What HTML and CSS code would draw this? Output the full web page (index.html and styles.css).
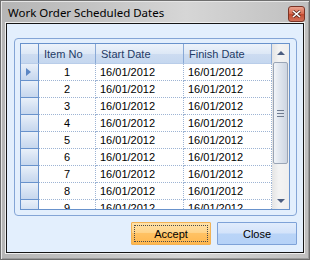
FILE: index.html
```html
<!DOCTYPE html>
<html lang="en">
<head>
    <meta charset="UTF-8">
    <title>Work Order Scheduled Dates</title>
    <link rel="stylesheet" href="styles.css">
</head>
<body>

    <div class="window">
        <div class="titlebar">
            <span class="title">Work Order Scheduled Dates</span>
            <span class="close-box">
                <svg width="9" height="8" viewBox="0 0 9 8">
                    <path d="M1 1 L8 7 M8 1 L1 7" stroke="#5a2a20" stroke-width="3"/>
                    <path d="M1 1 L8 7 M8 1 L1 7" stroke="#ffffff" stroke-width="1.6"/>
                </svg>
            </span>
        </div>

        <div class="client">
            <div class="panel">
                <div class="grid">
                    <div class="table">
                        <div class="corner"></div>
                        <div class="col-head">Item No</div>
                        <div class="col-head">Start Date</div>
                        <div class="col-head">Finish Date</div>

                        <div class="row-head current"><span class="arrow"></span></div>
                        <div class="cell num">1</div><div class="cell">16/01/2012</div><div class="cell">16/01/2012</div>
                        <div class="row-head"></div>
                        <div class="cell num">2</div><div class="cell">16/01/2012</div><div class="cell">16/01/2012</div>
                        <div class="row-head"></div>
                        <div class="cell num">3</div><div class="cell">16/01/2012</div><div class="cell">16/01/2012</div>
                        <div class="row-head"></div>
                        <div class="cell num">4</div><div class="cell">16/01/2012</div><div class="cell">16/01/2012</div>
                        <div class="row-head"></div>
                        <div class="cell num">5</div><div class="cell">16/01/2012</div><div class="cell">16/01/2012</div>
                        <div class="row-head"></div>
                        <div class="cell num">6</div><div class="cell">16/01/2012</div><div class="cell">16/01/2012</div>
                        <div class="row-head"></div>
                        <div class="cell num">7</div><div class="cell">16/01/2012</div><div class="cell">16/01/2012</div>
                        <div class="row-head"></div>
                        <div class="cell num">8</div><div class="cell">16/01/2012</div><div class="cell">16/01/2012</div>
                        <div class="row-head"></div>
                        <div class="cell num">9</div><div class="cell">16/01/2012</div><div class="cell">16/01/2012</div>
                    </div>

                    <div class="scrollbar">
                        <div class="scroll-btn"><span class="tri-up"></span></div>
                        <div class="track">
                            <div class="thumb"><span class="grip"></span></div>
                        </div>
                        <div class="scroll-btn"><span class="tri-down"></span></div>
                    </div>
                </div>
            </div>

            <div class="buttons">
                <button class="btn btn-accept"><span class="focus">Accept</span></button>
                <button class="btn btn-close">Close</button>
            </div>
        </div>
    </div>

</body>
</html>
```

FILE: styles.css
```css
body {
    margin: 0;
    padding: 0;
    background-color: #ffffff;
}

/* window frame */
.window {
    width: 310px;
    height: 260px;
    box-sizing: border-box;
    border: 1px solid #6f6f6f;
    padding: 0 5px 6px 5px;
    display: flex;
    flex-direction: column;
    background: linear-gradient(to right, #b5b5b5, #c4c4c4 30%, #d6d6d6 60%, #bfbfbf);
    box-shadow: inset 1px 1px 0 #e6e6e6, inset -1px -1px 0 #9a9a9a;
}

.titlebar {
    height: 22px;
    display: flex;
    align-items: center;
    justify-content: space-between;
    padding-left: 2px;
}

.title {
    font-family: "Noto Sans", sans-serif;
    font-size: 11.5px;
    color: #000000;
    padding-top: 1px;
}

.close-box {
    width: 17px;
    height: 16px;
    box-sizing: border-box;
    margin-top: 3px;
    margin-right: -1px;
    border: 1px solid #7a3325;
    border-radius: 3px;
    background: linear-gradient(#e9a38f, #d8694f 50%, #c24a2f 51%, #d2705a);
    display: flex;
    align-items: center;
    justify-content: center;
}

/* client area */
.client {
    flex: 1;
    border: 1px solid #151515;
    box-shadow: 0 0 0 1px #eeeeee;
    background-color: #e3effd;
    padding: 14px 6px 7px 7px;
    display: flex;
    flex-direction: column;
}

.panel {
    height: 178px;
    box-sizing: border-box;
    border: 1px solid #84a5d6;
    border-radius: 4px;
    padding: 4px 6px 5px 5px;
}

.grid {
    height: 167px;
    box-sizing: border-box;
    border: 1px solid #6892cc;
    display: flex;
    overflow: hidden;
    background-color: #ffffff;
}

.table {
    display: grid;
    grid-template-columns: 18px 57px 88px 88px;
    grid-template-rows: 20px;
    grid-auto-rows: 17px;
    font-family: "Liberation Sans", Arial, sans-serif;
    font-size: 11px;
}

.table > div {
    box-sizing: border-box;
    overflow: hidden;
    white-space: nowrap;
}

.corner,
.col-head {
    background: linear-gradient(#edf3fb, #dde8f6 50%, #cddcf1 51%, #c5d7ef);
    border-bottom: 1px solid #b9cde9;
}

.corner {
    border-right: 1px solid #6892cc;
}

.col-head {
    border-right: 1px solid #89a9d6;
    color: #1f3b66;
    padding: 4px 0 0 5px;
}

.row-head {
    background: linear-gradient(#e9f0f9, #d3e0f2 60%, #c6d7ee);
    border-right: 1px solid #6892cc;
    border-bottom: 1px solid #6892cc;
    position: relative;
}

.arrow {
    position: absolute;
    left: 5px;
    top: 4px;
    width: 0;
    height: 0;
    border-top: 4px solid transparent;
    border-bottom: 4px solid transparent;
    border-left: 5px solid #5b86c4;
}

.cell {
    border-right: 1px dotted #9db4d4;
    border-bottom: 1px dotted #9db4d4;
    color: #000000;
    padding: 2px 0 0 4px;
}

.num {
    text-align: center;
    padding-left: 0;
}

/* scrollbar */
.scrollbar {
    width: 17px;
    display: flex;
    flex-direction: column;
    background: linear-gradient(to right, #e4e4e4, #f3f3f3 40%, #eeeeee);
}

.scroll-btn {
    height: 17px;
    display: flex;
    align-items: center;
    justify-content: center;
}

.tri-up {
    width: 0;
    height: 0;
    border-left: 4px solid transparent;
    border-right: 4px solid transparent;
    border-bottom: 4px solid #4b5d80;
}

.tri-down {
    width: 0;
    height: 0;
    border-left: 4px solid transparent;
    border-right: 4px solid transparent;
    border-top: 4px solid #4b5d80;
}

.track {
    flex: 1;
    padding: 1px 1px 0 1px;
}

.thumb {
    height: 102px;
    box-sizing: border-box;
    border: 1px solid #9aa5b6;
    border-radius: 2px;
    background: linear-gradient(to right, #f1f4f8, #dfe5ee 45%, #cdd5e1);
    display: flex;
    align-items: center;
    justify-content: center;
}

.grip {
    width: 7px;
    height: 5px;
    border-top: 1px solid #6f7b8f;
    border-bottom: 1px solid #6f7b8f;
    background: linear-gradient(transparent 2px, #6f7b8f 2px, #6f7b8f 3px, transparent 3px);
}

/* buttons */
.buttons {
    display: flex;
    justify-content: flex-end;
    gap: 6px;
    margin-top: 6px;
}

.btn {
    width: 80px;
    height: 23px;
    box-sizing: border-box;
    margin: 0;
    padding: 0;
    font-family: "Liberation Sans", Arial, sans-serif;
    font-size: 11px;
    color: #000000;
    border-radius: 1px;
}

.btn-accept {
    border: 1px solid #f2b255;
    background: linear-gradient(#ffe2a8, #ffd48a 45%, #ffc264 50%, #ffb74e);
    padding: 2px;
}

.focus {
    display: flex;
    align-items: center;
    justify-content: center;
    height: 100%;
    box-sizing: border-box;
    border: 1px dotted #4a4a4a;
}

.btn-close {
    border: 1px solid #7ea2d8;
    background: linear-gradient(#e1ecfc, #d3e3fa 48%, #b9d4f7 52%, #b6d2f7);
}
```
